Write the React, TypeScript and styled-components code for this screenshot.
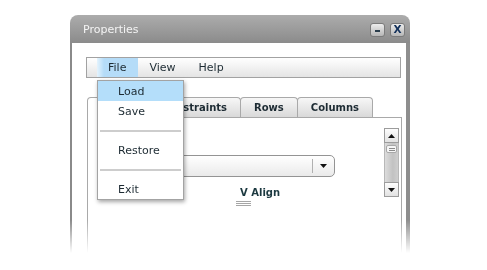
import React from "react";
import styled, { createGlobalStyle } from "styled-components";

const GlobalStyle = createGlobalStyle`
  html, body {
    margin: 0;
    padding: 0;
    background: #ffffff;
  }
  body {
    font-family: "DejaVu Sans", Verdana, sans-serif;
  }
`;

const Page = styled.div`
  width: 487px;
  height: 270px;
  box-sizing: border-box;
  padding: 15px 0 0 70px;
  overflow: hidden;
`;

// the whole window fades out towards the bottom
const Window = styled.div`
  width: 340px;
  height: 255px;
  display: flex;
  flex-direction: column;
  -webkit-mask-image: linear-gradient(to bottom, #000 205px, transparent 238px);
  mask-image: linear-gradient(to bottom, #000 205px, transparent 238px);
`;

const TitleBar = styled.div`
  height: 28px;
  flex-shrink: 0;
  display: flex;
  align-items: center;
  padding: 0 5px 0 13px;
  border-radius: 8px 8px 0 0;
  background: linear-gradient(#acacac, #8b8b8b);
`;

const Title = styled.div`
  flex: 1;
  color: #f4f4f4;
  font-size: 11px;
`;

const TitleButtons = styled.div`
  display: flex;
  gap: 5px;
  margin-top: 1px;
`;

const TitleButton = styled.div`
  width: 15px;
  height: 14px;
  box-sizing: border-box;
  border: 1px solid #7b7b7b;
  border-radius: 3px;
  background: linear-gradient(#ededed, #b6b6b6);
  display: flex;
  align-items: center;
  justify-content: center;
  color: #12305a;
  font-size: 10.5px;
  font-weight: bold;
  line-height: 1;
`;

const MinusGlyph = styled.div`
  width: 5px;
  height: 2px;
  margin-top: 2px;
  background: #2a3d4c;
`;

const Body = styled.div`
  flex: 1;
  display: flex;
  flex-direction: column;
  background: #ffffff;
  border-left: 2px solid #8a8a8a;
  border-right: 4px solid #8e8e8e;
  padding: 14px 5px 0 14px;
`;

const MenuBar = styled.div`
  height: 21px;
  flex-shrink: 0;
  box-sizing: border-box;
  border: 1px solid #a2a2a2;
  background: linear-gradient(#ffffff, #e4e4e4);
  display: flex;
  padding-left: 10px;
`;

const MenuItem = styled.div<{ $open?: boolean }>`
  position: relative;
  padding: 0 12px 0 11px;
  display: flex;
  align-items: center;
  font-size: 11px;
  color: #1d2b33;
  background: ${(p) =>
    p.$open ? "linear-gradient(to right, #e4f3fd, #b5dcf8 7px, #b5dcf8)" : "transparent"};
`;

const Dropdown = styled.div`
  position: absolute;
  left: 0;
  top: calc(100% + 3px);
  width: 87px;
  box-sizing: border-box;
  border: 1px solid #a3a3a3;
  background: #ffffff;
  box-shadow: 1px 2px 4px rgba(0, 0, 0, 0.35);
  z-index: 5;
`;

const DropItem = styled.div<{ $active?: boolean }>`
  height: 20px;
  padding-left: 20px;
  display: flex;
  align-items: center;
  font-size: 11px;
  color: #1d2b33;
  background: ${(p) => (p.$active ? "#b4defa" : "transparent")};
`;

const DropSeparator = styled.div`
  height: 19px;
  padding: 0 2px;
  display: flex;
  align-items: center;

  &::after {
    content: "";
    flex: 1;
    height: 2px;
    background: #cdcdcd;
  }
`;

const TabStrip = styled.div`
  display: flex;
  align-items: flex-end;
  margin: 19px 0 0 1px;
`;

const Tab = styled.div<{ $selected?: boolean }>`
  height: ${(p) => (p.$selected ? "21px" : "20px")};
  min-width: ${(p) => (p.$selected ? "62px" : "0")};
  margin-bottom: ${(p) => (p.$selected ? "-1px" : "0")};
  margin-right: -1px;
  box-sizing: border-box;
  padding: 0 13px;
  border: 1px solid #a9a9a9;
  border-bottom: none;
  border-radius: 4px 4px 0 0;
  display: flex;
  align-items: center;
  justify-content: center;
  font-size: 10px;
  font-weight: bold;
  color: #1d2b33;
  background: ${(p) => (p.$selected ? "#ffffff" : "linear-gradient(#f7f7f7, #d9d9d9)")};
  ${(p) => (p.$selected ? "position: relative; z-index: 1; padding-bottom: 1px;" : "")}
`;

const Panel = styled.div`
  flex: 1;
  display: flex;
  margin: 0 -1px 0 1px;
  padding: 10px 2px 0 12px;
  border: 1px solid #a9a9a9;
  border-bottom: none;
`;

const PanelContent = styled.div`
  flex: 1;
  display: flex;
  flex-direction: column;
`;

const Combo = styled.div`
  margin-top: 27px;
  width: 235px;
  height: 22px;
  box-sizing: border-box;
  border: 1px solid #949494;
  border-radius: 5px;
  background: linear-gradient(#ffffff, #eaeaea);
  display: flex;
  justify-content: flex-end;
  align-items: center;
`;

const ComboArrow = styled.div`
  width: 21px;
  height: 14px;
  border-left: 1px solid #b0b0b0;
  display: flex;
  align-items: center;
  justify-content: center;
`;

const FieldLabel = styled.div`
  margin: 10px 0 0 140px;
  font-size: 10px;
  font-weight: bold;
  line-height: 12px;
  color: #1c3940;
`;

const Grip = styled.div`
  margin: 2px 0 0 136px;
  width: 15px;
  height: 5px;
  background: repeating-linear-gradient(#a6a6a6 0 1px, transparent 1px 2px);
`;

const ScrollBar = styled.div`
  width: 15px;
  height: 69px;
  flex-shrink: 0;
  display: flex;
  flex-direction: column;
`;

const ScrollButton = styled.div`
  height: 15px;
  box-sizing: border-box;
  border: 1px solid #9c9c9c;
  background: linear-gradient(#fdfdfd, #e2e2e2);
  display: flex;
  align-items: center;
  justify-content: center;
`;

const Track = styled.div`
  flex: 1;
  padding: 2px 1px 0;
  border-left: 1px solid #b8b8b8;
  border-right: 1px solid #b8b8b8;
  background: linear-gradient(to right, #dcdcdc, #c2c2c2 60%, #cecece);
`;

const Thumb = styled.div`
  height: 8px;
  box-sizing: border-box;
  border: 1px solid #a8a8a8;
  border-radius: 2px;
  background: #f6f6f6;
  display: flex;
  justify-content: center;
  align-items: center;

  &::after {
    content: "";
    width: 6px;
    height: 4px;
    background: repeating-linear-gradient(#8a8a8a 0 1px, transparent 1px 2px);
    margin-top: 1px;
  }
`;

const Triangle = ({ down }: { down?: boolean }) => (
  <svg width="7" height="4" viewBox="0 0 7 4">
    <path d={down ? "M0 0H7L3.5 4Z" : "M0 4H7L3.5 0Z"} fill="#111" />
  </svg>
);

const App: React.FC = () => {
  return (
    <Page>
      <GlobalStyle />
      <Window>
        <TitleBar>
          <Title>Properties</Title>
          <TitleButtons>
            <TitleButton>
              <MinusGlyph />
            </TitleButton>
            <TitleButton>X</TitleButton>
          </TitleButtons>
        </TitleBar>
        <Body>
          <MenuBar>
            <MenuItem $open>
              File
              <Dropdown>
                <DropItem $active>Load</DropItem>
                <DropItem>Save</DropItem>
                <DropSeparator />
                <DropItem>Restore</DropItem>
                <DropSeparator />
                <DropItem>Exit</DropItem>
              </Dropdown>
            </MenuItem>
            <MenuItem>View</MenuItem>
            <MenuItem>Help</MenuItem>
          </MenuBar>
          <TabStrip>
            <Tab $selected>Table</Tab>
            <Tab>Constraints</Tab>
            <Tab>Rows</Tab>
            <Tab>Columns</Tab>
          </TabStrip>
          <Panel>
            <PanelContent>
              <Combo>
                <ComboArrow>
                  <Triangle down />
                </ComboArrow>
              </Combo>
              <FieldLabel>V Align</FieldLabel>
              <Grip />
            </PanelContent>
            <ScrollBar>
              <ScrollButton>
                <Triangle />
              </ScrollButton>
              <Track>
                <Thumb />
              </Track>
              <ScrollButton>
                <Triangle down />
              </ScrollButton>
            </ScrollBar>
          </Panel>
        </Body>
      </Window>
    </Page>
  );
};

export default App;
